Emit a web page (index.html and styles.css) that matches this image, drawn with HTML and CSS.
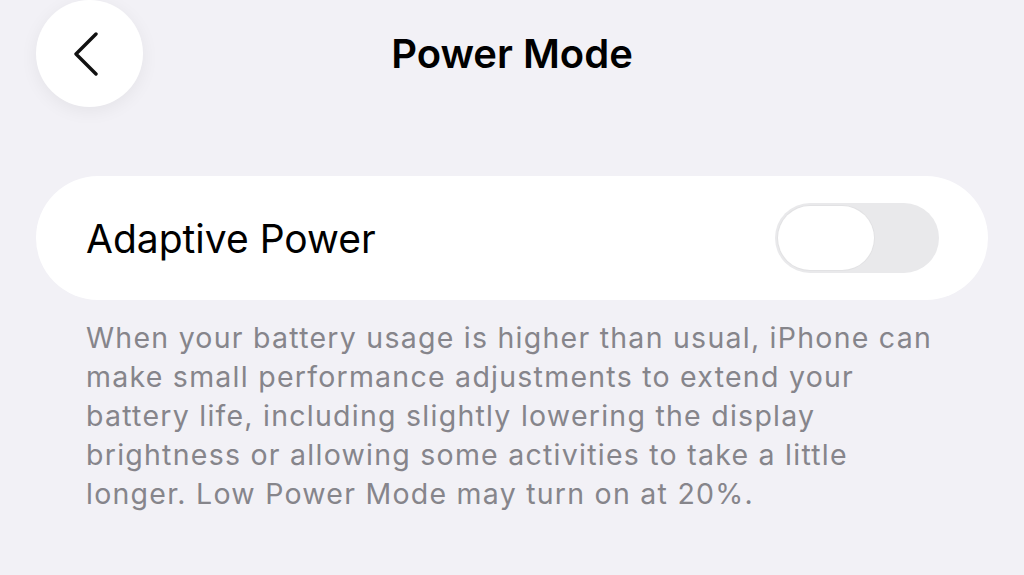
FILE: index.html
```html
<!DOCTYPE html>
<html lang="en">
<head>
  <meta charset="UTF-8">
  <meta name="viewport" content="width=device-width, initial-scale=1.0">
  <title>Power Mode</title>
  <link rel="stylesheet" href="styles.css">
</head>
<body>
  <div class="nav">
    <button class="back" aria-label="Back">
      <svg width="28" height="44" viewBox="0 0 28 44">
        <path d="M24 2 L4 22 L24 42" fill="none" stroke="#111" stroke-width="3.4" stroke-linecap="round" stroke-linejoin="round"/>
      </svg>
    </button>
    <div class="title">Power Mode</div>
  </div>

  <div class="card">
    <div class="label">Adaptive Power</div>
    <div class="toggle"><div class="knob"></div></div>
  </div>

  <p class="footnote">
    When your battery usage is higher than usual, iPhone can<br>
    make small performance adjustments to extend your<br>
    battery life, including slightly lowering the display<br>
    brightness or allowing some activities to take a little<br>
    longer. Low Power Mode may turn on at 20%.
  </p>
</body>
</html>
```

FILE: styles.css
```css
* {
  box-sizing: border-box;
}

body {
  margin: 0;
  width: 1024px;
  height: 575px;
  overflow: hidden;
  background: #f2f1f6;
  font-family: Inter, "Noto Sans", sans-serif;
  color: #000;
  padding: 0 36px;
}

.nav {
  position: relative;
  height: 107px;
  display: flex;
  align-items: center;
  justify-content: center;
}

.back {
  position: absolute;
  left: 0;
  top: 0;
  width: 107px;
  height: 107px;
  border-radius: 50%;
  border: 0;
  background: #fff;
  box-shadow: 0 4px 18px rgba(0, 0, 0, 0.06);
  display: flex;
  align-items: center;
  justify-content: center;
  padding: 0 8px 0 0;
}

.title {
  font-size: 40px;
  font-weight: 600;
  margin-top: 0;
}

.card {
  margin-top: 69px;
  height: 124px;
  border-radius: 62px;
  background: #fff;
  display: flex;
  align-items: center;
  justify-content: space-between;
  padding: 0 49px 0 50px;
}

.label {
  font-size: 39px;
  font-weight: 400;
}

.toggle {
  width: 164px;
  height: 70px;
  border-radius: 35px;
  background: #e9e9eb;
  padding: 3px;
}

.knob {
  width: 96px;
  height: 64px;
  border-radius: 32px;
  background: #fff;
  box-shadow: 0 0 0 1px #e2e2e4;
}

.footnote {
  margin: 18px 0 0 50px;
  font-size: 28.5px;
  line-height: 39px;
  letter-spacing: 1.25px;
  color: #86858b;
}
```
